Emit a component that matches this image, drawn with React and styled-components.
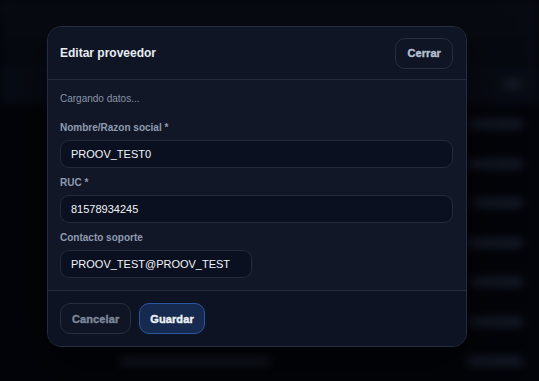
import React from 'react';
import styled, { createGlobalStyle } from 'styled-components';

const GlobalStyle = createGlobalStyle`
    * { box-sizing: border-box; }
    html, body {
        margin: 0;
        padding: 0;
        background: #03050a;
        font-family: "Liberation Sans", Arial, sans-serif;
        overflow: hidden;
    }
`;

const Screen = styled.div`
    position: relative;
    width: 539px;
    height: 381px;
    overflow: hidden;
    background: #03050a;
`;

// blurred page behind the modal
const Backdrop = styled.div`
    width: 100%;
    height: 100%;
    filter: blur(4px);
    display: flex;
    flex-direction: column;
`;

const TopBand = styled.div`
    height: 72px;
    background: linear-gradient(180deg, #0d1119 0%, #090c13 100%);
`;

const BgRow = styled.div`
    height: 44px;
    display: flex;
    align-items: center;
    justify-content: space-between;
    padding: 0 16px 0 120px;
    background: ${p => (p.$head ? '#0c111b' : 'transparent')};

    span {
        display: block;
        height: 10px;
        border-radius: 4px;
        background: #222939;
    }
`;

const Overlay = styled.div`
    position: absolute;
    inset: 0;
    background: rgba(2, 4, 9, 0.42);
`;

const Modal = styled.div`
    position: absolute;
    left: 47px;
    top: 26px;
    width: 420px;
    border: 1px solid #242d3d;
    border-radius: 14px;
    background: #111726;
    overflow: hidden;
    box-shadow: 0 20px 50px rgba(0, 0, 0, 0.6);
`;

const Header = styled.div`
    height: 53px;
    display: flex;
    align-items: center;
    justify-content: space-between;
    padding: 0 13px 0 12px;
    background: #0f1524;
    border-bottom: 1px solid #242d3d;

    h2 {
        margin: 0;
        font-size: 12px;
        font-weight: 700;
        color: #e8ecf3;
    }
`;

const Button = styled.button`
    height: 31px;
    padding: 0 ${p => (p.$primary ? '10px' : '11px')};
    border-radius: 10px;
    font-family: "Liberation Sans", Arial, sans-serif;
    font-size: 11px;
    font-weight: 700;
    -webkit-text-stroke: 0.4px currentColor;
    letter-spacing: 0.1px;
    cursor: pointer;
    border: 1px solid ${p => (p.$primary ? '#2b579f' : '#252f40')};
    background: ${p => (p.$primary ? '#16294e' : '#0f1524')};
    color: ${p => (p.$primary ? '#eef2f8' : p.$muted ? '#7d889a' : '#b5c0d0')};
`;

const Body = styled.div`
    display: flex;
    flex-direction: column;
    padding: 13px 13px 12px 12px;
    border-bottom: 1px solid #242d3d;
`;

const Loading = styled.p`
    margin: 0 0 17px;
    font-size: 10px;
    line-height: 12px;
    color: #8893a6;
`;

const Field = styled.div`
    display: flex;
    flex-direction: column;
    margin-bottom: 9px;

    &:last-child {
        margin-bottom: 0;
    }
`;

const Label = styled.label`
    font-size: 10px;
    line-height: 12px;
    font-weight: 700;
    color: #8f9bb0;
    margin-bottom: 6px;
`;

const Input = styled.input`
    width: ${p => p.$width || '100%'};
    height: 28px;
    padding: 0 10px;
    border: 1px solid #222b3b;
    border-radius: 9px;
    background: #0b1020;
    color: #f1f4f9;
    font-family: "Liberation Sans", Arial, sans-serif;
    font-size: 11px;
    outline: none;
`;

const Footer = styled.div`
    height: 55px;
    display: flex;
    align-items: center;
    gap: 8px;
    padding: 0 12px;
    background: #0d1322;
`;

function EditarProveedor() {
    return (
        <Modal>
            <Header>
                <h2>Editar proveedor</h2>
                <Button>Cerrar</Button>
            </Header>
            <Body>
                <Loading>Cargando datos...</Loading>
                <Field>
                    <Label>Nombre/Razon social *</Label>
                    <Input defaultValue="PROOV_TEST0" />
                </Field>
                <Field>
                    <Label>RUC *</Label>
                    <Input defaultValue="81578934245" />
                </Field>
                <Field>
                    <Label>Contacto soporte</Label>
                    <Input $width="192px" defaultValue="PROOV_TEST@PROOV_TEST" />
                </Field>
            </Body>
            <Footer>
                <Button $muted>Cancelar</Button>
                <Button $primary>Guardar</Button>
            </Footer>
        </Modal>
    );
}

export default function App() {
    const rows = [54, 56, 50, 56, 52, 54, 56];
    return (
        <>
            <GlobalStyle />
            <Screen>
                <Backdrop>
                    <TopBand />
                    <BgRow $head>
                        <span style={{ width: 0 }} />
                        <span style={{ width: 20 }} />
                    </BgRow>
                    {rows.map((w, i) => (
                        <BgRow key={i}>
                            <span style={{ width: i === 6 ? 150 : 0 }} />
                            <span style={{ width: w }} />
                        </BgRow>
                    ))}
                </Backdrop>
                <Overlay />
                <EditarProveedor />
            </Screen>
        </>
    );
}
